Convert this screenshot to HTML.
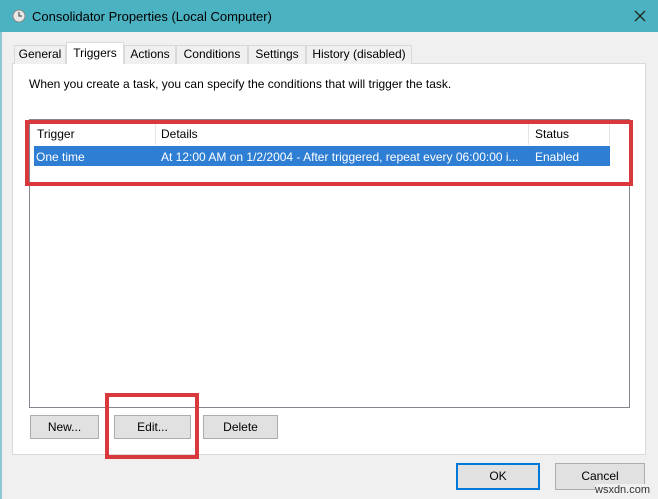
<!DOCTYPE html>
<html><head><style>
*{margin:0;padding:0;box-sizing:border-box}
body{width:658px;height:499px;background:#f0f0f0;font-family:"Liberation Sans",sans-serif;font-size:12px;color:#000;position:relative;overflow:hidden}
.a{position:absolute}
.title{left:0;top:0;width:658px;height:32px;background:#4bb2c2}
.edge{left:0;top:32px;width:2px;height:467px;background:#8cc9d3}
.tab{position:absolute;top:45px;height:19px;border:1px solid #d9d9d9;border-bottom:none;background:#f0f0f0;font-size:12px;line-height:17px;text-align:center}
.panel{left:12px;top:63px;width:634px;height:392px;background:#fff;border:1px solid #dadada}
.list{left:29px;top:119px;width:601px;height:289px;border:1px solid #828790;background:#fff}
.btn{position:absolute;background:#e1e1e1;border:1px solid #adadad;text-align:center;line-height:22px;font-size:12px}
.red{position:absolute;border:4px solid #d9383c}
</style></head><body>
<div class="a title"></div>
<div class="a edge"></div>
<svg class="a" style="left:12px;top:9px" width="14" height="14"><circle cx="7" cy="7" r="6" fill="#e8e8e8" stroke="#888"/><path d="M7 3v4h3" stroke="#555" fill="none" stroke-width="1.2"/></svg>
<div class="a" style="left:32px;top:9px;font-size:13px">Consolidator Properties (Local Computer)</div>
<svg class="a" style="left:634px;top:10px" width="12" height="12"><path d="M1 1L11 11M11 1L1 11" stroke="#222" stroke-width="1.3"/></svg>
<div class="a panel"></div>
<div class="tab" style="left:14px;width:52px">General</div>
<div class="tab" style="left:66px;top:42px;height:22px;width:58px;background:#fff;line-height:20px">Triggers</div>
<div class="tab" style="left:124px;width:52px">Actions</div>
<div class="tab" style="left:176px;width:72px">Conditions</div>
<div class="tab" style="left:248px;width:58px">Settings</div>
<div class="tab" style="left:306px;width:106px">History (disabled)</div>
<div class="a" style="left:29px;top:77px">When you create a task, you can specify the conditions that will trigger the task.</div>
<div class="a list"></div>
<div class="a" style="left:155px;top:123px;width:1px;height:22px;background:#e5e5e5"></div>
<div class="a" style="left:528px;top:123px;width:1px;height:22px;background:#e5e5e5"></div>
<div class="a" style="left:609px;top:123px;width:1px;height:22px;background:#e5e5e5"></div>
<div class="a" style="left:37px;top:127px">Trigger</div>
<div class="a" style="left:161px;top:127px">Details</div>
<div class="a" style="left:535px;top:127px">Status</div>
<div class="a" style="left:34px;top:146px;width:576px;height:20px;background:#2e7ed4"></div>
<div class="a" style="left:36px;top:150px;color:#fff">One time</div>
<div class="a" style="left:161px;top:150px;color:#fff">At 12:00 AM on 1/2/2004 - After triggered, repeat every 06:00:00 i...</div>
<div class="a" style="left:535px;top:150px;color:#fff">Enabled</div>
<div class="red" style="left:25px;top:120px;width:608px;height:66px"></div>
<div class="btn" style="left:30px;top:415px;width:69px;height:24px">New...</div>
<div class="btn" style="left:114px;top:415px;width:77px;height:24px">Edit...</div>
<div class="btn" style="left:203px;top:415px;width:75px;height:24px">Delete</div>
<div class="red" style="left:105px;top:393px;width:94px;height:66px"></div>
<div class="btn" style="left:456px;top:463px;width:84px;height:27px;border:2px solid #0078d7;line-height:23px">OK</div>
<div class="btn" style="left:555px;top:463px;width:90px;height:27px;line-height:25px">Cancel</div>
<div class="a" style="left:595px;top:484px;font-size:11px;color:#333;background:#f0f0f0">wsxdn.com</div>
</body></html>
